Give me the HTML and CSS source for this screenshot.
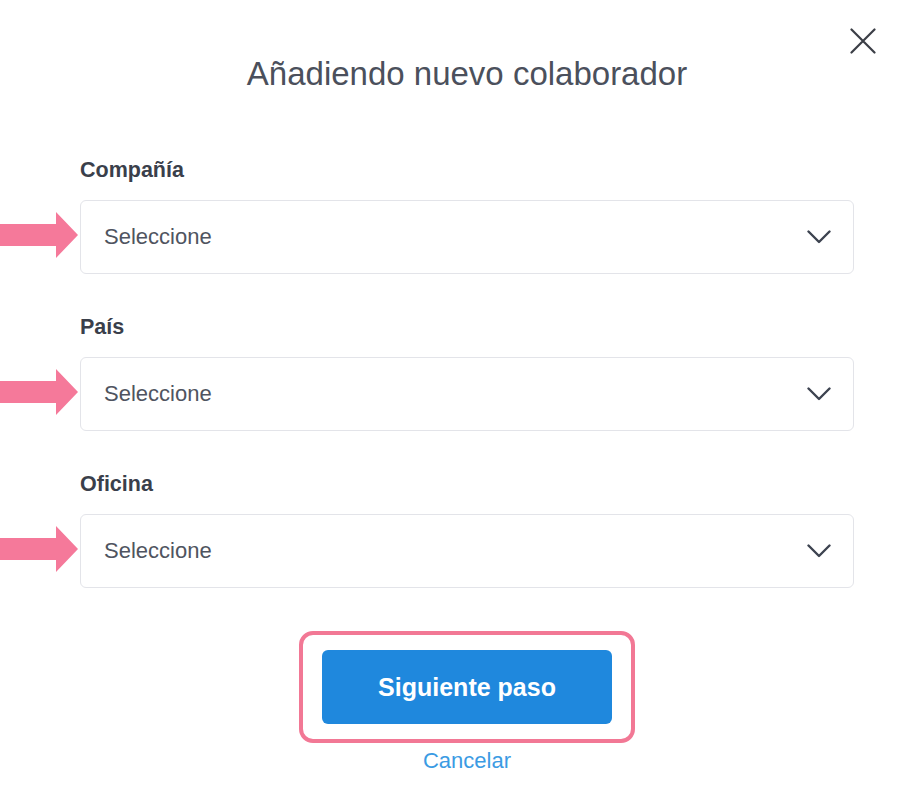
FILE: index.html
```html
<!DOCTYPE html>
<html lang="es">
<head>
<meta charset="utf-8">
<title>Añadiendo nuevo colaborador</title>
<link rel="stylesheet" href="styles.css">
</head>
<body>
<main class="modal">
  <button class="close" type="button" aria-label="Cerrar">
    <svg width="26" height="26" viewBox="0 0 26 26"><path d="M1.5 1.5 L24.5 24.5 M24.5 1.5 L1.5 24.5" stroke="#3b3e46" stroke-width="2.2" stroke-linecap="round" fill="none"/></svg>
  </button>
  <h1 class="title">Añadiendo nuevo colaborador</h1>
  <form class="form">
    <div class="field">
      <label class="label">Compañía</label>
      <div class="row">
        <svg class="arrow" width="78" height="46" viewBox="0 0 78 46"><polygon points="0,12 56,12 56,0 78,23 56,46 56,34 0,34" fill="#f5799a"/></svg>
        <div class="select"><span>Seleccione</span><svg width="24" height="14" viewBox="0 0 24 14"><path d="M1.5 1.5 L12 12 L22.5 1.5" stroke="#3d4350" stroke-width="2.4" fill="none" stroke-linecap="round" stroke-linejoin="round"/></svg></div>
      </div>
    </div>
    <div class="field">
      <label class="label">País</label>
      <div class="row">
        <svg class="arrow" width="78" height="46" viewBox="0 0 78 46"><polygon points="0,12 56,12 56,0 78,23 56,46 56,34 0,34" fill="#f5799a"/></svg>
        <div class="select"><span>Seleccione</span><svg width="24" height="14" viewBox="0 0 24 14"><path d="M1.5 1.5 L12 12 L22.5 1.5" stroke="#3d4350" stroke-width="2.4" fill="none" stroke-linecap="round" stroke-linejoin="round"/></svg></div>
      </div>
    </div>
    <div class="field">
      <label class="label">Oficina</label>
      <div class="row">
        <svg class="arrow" width="78" height="46" viewBox="0 0 78 46"><polygon points="0,12 56,12 56,0 78,23 56,46 56,34 0,34" fill="#f5799a"/></svg>
        <div class="select"><span>Seleccione</span><svg width="24" height="14" viewBox="0 0 24 14"><path d="M1.5 1.5 L12 12 L22.5 1.5" stroke="#3d4350" stroke-width="2.4" fill="none" stroke-linecap="round" stroke-linejoin="round"/></svg></div>
      </div>
    </div>
    <div class="actions">
      <div class="highlight">
        <button class="primary" type="button">Siguiente paso</button>
      </div>
      <a class="cancel" href="#">Cancelar</a>
    </div>
  </form>
</main>
</body>
</html>
```
FILE: styles.css
```css
* { box-sizing: border-box; }
html, body {
  margin: 0;
  padding: 0;
  background: #ffffff;
}
body {
  font-family: "Liberation Sans", Arial, sans-serif;
  color: #4b505c;
}
.modal {
  position: relative;
  width: 904px;
  min-height: 809px;
  padding-top: 54px;
}
.close {
  position: absolute;
  top: 28px;
  left: 850px;
  width: 26px;
  height: 26px;
  padding: 0;
  border: 0;
  background: none;
  display: flex;
}
.title {
  margin: 0;
  height: 40px;
  line-height: 40px;
  font-size: 33px;
  font-weight: 400;
  text-align: center;
  color: #4b505c;
  padding-left: 30px;
}
.form {
  margin-top: 64px;
  display: flex;
  flex-direction: column;
}
.field {
  display: flex;
  flex-direction: column;
  margin-bottom: 41px;
}
.field:nth-child(3) { margin-bottom: 43px; }
.label {
  display: block;
  margin-left: 80px;
  height: 24px;
  line-height: 24px;
  font-size: 21.5px;
  font-weight: 700;
  color: #3a3f4b;
  margin-bottom: 18px;
}
.row {
  display: grid;
  grid-template-columns: 80px 774px;
  align-items: center;
}
.arrow {
  display: block;
  margin-top: -5px;
}
.select {
  height: 74px;
  border: 1.5px solid #e3e4e9;
  border-radius: 6px;
  display: flex;
  align-items: center;
  justify-content: space-between;
  padding: 0 22px 0 23px;
  font-size: 22px;
  color: #4f5460;
}
.select svg { display: block; }
.actions {
  display: flex;
  flex-direction: column;
  align-items: center;
  padding-left: 30px;
}
.highlight {
  border: 4px solid #f27895;
  border-radius: 14px;
  padding: 15px 19px;
}
.primary {
  display: block;
  width: 290px;
  height: 74px;
  border: 0;
  border-radius: 6px;
  background: #1f88dd;
  color: #ffffff;
  font-family: "Liberation Sans", Arial, sans-serif;
  font-size: 25px;
  font-weight: 700;
}
.cancel {
  margin-top: 6px;
  line-height: 24px;
  font-size: 22px;
  color: #3b9be3;
  text-decoration: none;
}
```
